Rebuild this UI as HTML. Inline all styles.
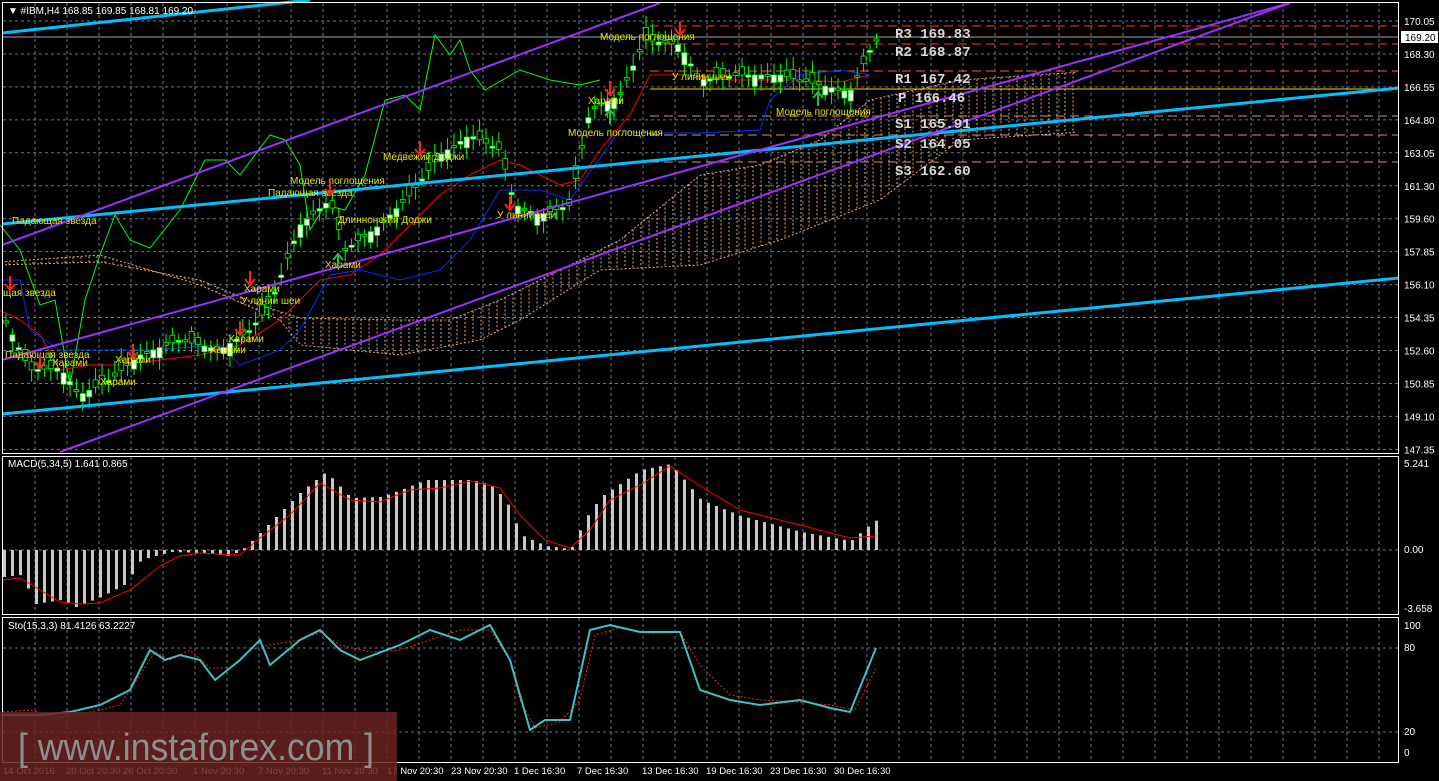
<!DOCTYPE html>
<html><head><meta charset="utf-8"><style>
html,body{margin:0;padding:0;background:#000;width:1439px;height:781px;overflow:hidden}
svg{display:block}
text{font-family:"Liberation Sans","DejaVu Sans",sans-serif}
.ax{fill:#fff;font-size:10px}
.pv text{fill:#d8d8d8;font-family:"Liberation Mono",monospace;font-size:14px;font-weight:bold}
.pt{fill:#e6e600;font-size:10px}
#xax text{font-size:9.5px}
</style></head><body>
<svg id="s" width="1439" height="781" xmlns="http://www.w3.org/2000/svg">
<rect width="1439" height="781" fill="#000"/>
<g id="grid" stroke="#6a7888" stroke-dasharray="3,3" stroke-width="1"></g>
<g id="cloud" stroke="#e8a878" stroke-width="1" stroke-dasharray="2,2" fill="none"></g>
<g stroke-width="1">
<line x1="650" y1="26" x2="1399" y2="26" stroke="#ff4000" stroke-dasharray="9,5"/>
<line x1="650" y1="44" x2="1399" y2="44" stroke="#ff4000" stroke-dasharray="9,5"/>
<line x1="650" y1="71" x2="1399" y2="71" stroke="#ff5a20" stroke-dasharray="9,5"/>
<line x1="650" y1="89" x2="1399" y2="89" stroke="#ffd000"/>
<line x1="650" y1="116" x2="1399" y2="116" stroke="#d09080" stroke-dasharray="9,5"/>
<line x1="650" y1="135" x2="1399" y2="135" stroke="#d09080" stroke-dasharray="9,5"/>
<line x1="650" y1="162" x2="1399" y2="162" stroke="#d09080" stroke-dasharray="9,5"/>
<line x1="2" y1="37" x2="1399" y2="37" stroke="#a0a0a0"/>
</g>
<g id="ind" fill="none" stroke-width="1"></g>
<g id="candles"></g>
<g stroke-width="3" stroke="#00bfff">
<line x1="2" y1="33" x2="310" y2="0"/>
<line x1="2" y1="224" x2="1399" y2="88"/>
<line x1="2" y1="414" x2="1399" y2="278"/>
</g>
<g stroke-width="2" stroke="#9b30ff">
<line x1="2" y1="245" x2="660" y2="3"/>
<line x1="2" y1="360" x2="1290" y2="3"/>
<line x1="60" y1="452" x2="1290" y2="3"/>
</g>
<g id="pat"></g>
<g class="pv">
<text x="895" y="38">R3 169.83</text>
<text x="895" y="56">R2 168.87</text>
<text x="895" y="83">R1 167.42</text>
<text x="898" y="102">P 166.46</text>
<text x="895" y="128">S1 165.91</text>
<text x="895" y="148">S2 164.05</text>
<text x="895" y="175">S3 162.60</text>
</g>
<g id="macd"></g>
<g id="sto" fill="none"></g>
<g fill="none" stroke="#fff" stroke-width="1">
<rect x="2.5" y="2.5" width="1396" height="451"/>
<rect x="2.5" y="456.5" width="1396" height="158"/>
<rect x="2.5" y="617.5" width="1396" height="145"/>
</g>
<text x="8" y="14" class="ax" font-size="11">▼ #IBM,H4  168.85 169.85 168.81 169.20</text>
<text x="8" y="467" class="ax">MACD(5,34,5) 1.641 0.865</text>
<text x="8" y="629" class="ax">Sto(15,3,3) 81.4126 63.2227</text>
<g id="yax" class="ax"></g>
<rect x="1401" y="31" width="37" height="12" fill="#fff"/>
<text x="1405" y="41" font-size="10" fill="#000">169.20</text>
<g class="ax">
<text x="1404" y="467">5.241</text><text x="1404" y="553">0.00</text><text x="1404" y="612">-3.658</text>
<text x="1404" y="629">100</text><text x="1404" y="651">80</text><text x="1404" y="735">20</text><text x="1404" y="756">0</text>
</g>
<g id="xax" class="ax"></g>
<rect x="0" y="712" width="397" height="69" fill="#6a2222" fill-opacity="0.85"/>
<text x="18" y="760" font-size="38" fill="#8e8e8e" textLength="356" lengthAdjust="spacingAndGlyphs">[ www.instaforex.com ]</text>
</svg>
<script>
var NS="http://www.w3.org/2000/svg";
function el(p,t,a){var e=document.createElementNS(NS,t);for(var k in a)e.setAttribute(k,a[k]);p.appendChild(e);return e;}
function gi(id){return document.getElementById(id);}
(function(){
var grid=gi("grid");
for(var x=35;x<1399;x+=32){el(grid,"line",{x1:x,y1:3,x2:x,y2:453});el(grid,"line",{x1:x,y1:457,x2:x,y2:614});el(grid,"line",{x1:x,y1:618,x2:x,y2:762});}
var labs=["170.05","168.30","166.55","164.80","163.05","161.30","159.60","157.85","156.10","154.35","152.60","150.85","149.10","147.35"];
for(var i=0;i<14;i++){var y=21+i*32.95;el(grid,"line",{x1:3,y1:y,x2:1399,y2:y});var t=el(gi("yax"),"text",{x:1404,y:y+4});t.textContent=labs[i];}
[550,648,732].forEach(function(y){el(grid,"line",{x1:3,y1:y,x2:1399,y2:y});});
var xl=[[3,"14 Oct 2016"],[66,"20 Oct 20:30"],[123,"26 Oct 20:30"],[193,"1 Nov 20:30"],[258,"7 Nov 20:30"],[322,"11 Nov 20:30"],[387,"17 Nov 20:30"],[451,"23 Nov 20:30"],[514,"1 Dec 16:30"],[577,"7 Dec 16:30"],[642,"13 Dec 16:30"],[706,"19 Dec 16:30"],[770,"23 Dec 16:30"],[834,"30 Dec 16:30"]];
xl.forEach(function(a){var t=el(gi("xax"),"text",{x:a[0],y:774});t.textContent=a[1];});
function interp(pts,x){for(var i=1;i<pts.length;i++){if(x<=pts[i][0]){var a=pts[i-1],b=pts[i];return a[1]+(b[1]-a[1])*(x-a[0])/(b[0]-a[0]);}}return pts[pts.length-1][1];}
function pl(p,pts,c,w,extra){var a={points:pts.map(function(q){return q.join(",")}).join(" "),stroke:c,"stroke-width":w||1,fill:"none"};for(var k in extra)a[k]=extra[k];return el(p,"polyline",a);}
var price=[[0,310],[30,370],[60,368],[80,395],[110,380],[140,355],[180,340],[220,350],[250,330],[270,305],[300,225],[330,200],[345,250],[380,225],[410,195],[440,155],[470,135],[500,150],[515,205],[540,215],[570,205],[590,110],[620,95],[645,40],[680,45],[700,80],[740,75],[780,75],[820,85],[850,92],[875,40]];
var cu=[],cl=[];
for(var x=5;x<1080;x+=4){var u=interp([[0,265],[100,262],[200,280],[260,305],[300,318],[400,320],[450,320],[500,300],[560,270],[620,240],[700,175],[760,165],[820,140],[870,100],[960,80],[1080,72]],x);var l=interp([[0,262],[100,255],[200,285],[280,320],[300,345],[400,355],[480,340],[520,320],[600,270],[700,265],[780,240],[830,220],[880,200],[960,140],[1080,132]],x);cu.push([x,u]);cl.push([x,l]);if(((x/4)|0)%2==0)el(gi("cloud"),"line",{x1:x,y1:u,x2:x,y2:l});}
pl(gi("cloud"),cu,"#e8a878",1);pl(gi("cloud"),cl,"#e8a878",1);
var ind=gi("ind");
pl(ind,[[0,225],[20,250],[40,305],[55,300],[70,385],[85,300],[100,255],[115,215],[130,240],[150,248],[180,210],[205,160],[225,160],[240,175],[270,135],[285,140],[300,165],[310,230],[325,205],[345,210],[365,175],[385,100],[405,95],[420,110],[435,35],[450,55],[460,40],[470,70],[485,90],[520,70],[550,80],[580,85],[600,80]],"#00ff00");
pl(ind,[[0,310],[20,320],[40,335],[60,370],[90,365],[120,365],[160,360],[200,355],[240,345],[280,320],[320,280],[350,275],[380,255],[410,225],[440,195],[470,175],[500,160],[520,165],[560,185],[580,180],[600,150],[630,115],[650,75],[690,75],[730,80],[760,80],[800,80],[840,82],[870,75]],"#ff0000");
pl(ind,[[0,280],[20,280],[30,330],[60,350],[100,350],[150,350],[220,345],[240,365],[280,350],[300,330],[330,275],[360,270],[400,280],[440,270],[470,240],[500,190],[540,190],[570,200],[620,130],[640,133],[700,133],[760,130],[770,100],[800,75],[840,70],[870,75]],"#0030ff");
var cg=gi("candles");
for(var x=6;x<880;x+=6.4){var y=interp(price,x);var d=(Math.sin(x*1.7)*7+Math.cos(x*0.9)*6);var hi=Math.min(y,y+d)-5-Math.abs(Math.sin(x))*7,lo=Math.max(y,y+d)+5+Math.abs(Math.cos(x*1.3))*7;
el(cg,"line",{x1:x,y1:hi,x2:x,y2:lo,stroke:"#00ff00"});
var bt=Math.min(y,y+d),h=Math.max(2,Math.abs(d));
el(cg,"rect",{x:x-2.5,y:bt,width:5,height:h,fill:(d>0?"#fff":"#000"),stroke:"#00ff00","stroke-width":0.8});}
var pat=gi("pat");
[[600,40,"Модель поглощения"],[672,80,"У линии шеи"],[776,115,"Модель поглощения"],[568,136,"Модель поглощения"],[383,160,"Медвежий Доджи"],[290,184,"Модель поглощения"],[268,196,"Падающая звезда"],[338,223,"Длинноногий Доджи"],[497,218,"У линии шеи"],[12,224,"Падающая звезда"],[588,104,"Харами"],[325,268,"Харами"],[3,296,"щая звезда"],[244,292,"Харами"],[241,304,"У линии шеи"],[5,358,"Падающая звезда"],[52,366,"Харами"],[115,363,"Харами"],[100,385,"Харами"],[228,342,"Харами"],[210,353,"Харами"]].forEach(function(a){var t=el(pat,"text",{x:a[0],y:a[1],class:"pt"});t.textContent=a[2];});
[[10,290],[40,368],[250,285],[330,195],[420,155],[510,210],[610,95],[680,35],[133,358],[240,335]].forEach(function(a){el(pat,"path",{d:"M"+a[0]+" "+(a[1]-14)+"V"+a[1]+"M"+(a[0]-5)+" "+(a[1]-6)+"L"+a[0]+" "+a[1]+"L"+(a[0]+5)+" "+(a[1]-6),stroke:"#ff2020","stroke-width":2,fill:"none"});});
[[338,268],[610,124],[818,106]].forEach(function(a){el(pat,"path",{d:"M"+a[0]+" "+(a[1]-14)+"V"+a[1]+"M"+(a[0]-5)+" "+(a[1]-8)+"L"+a[0]+" "+(a[1]-14)+"L"+(a[0]+5)+" "+(a[1]-8),stroke:"#20c040","stroke-width":2,fill:"none"});});
var m=gi("macd");
var mp=[[3,577],[20,575],[35,604],[60,600],[75,607],[100,597],[125,584],[140,560],[170,552],[200,553],[230,556],[245,547],[265,527],[300,492],[325,472],[350,498],[380,497],[400,490],[425,480],[470,480],[490,485],[505,500],[520,535],[545,546],[570,549],[585,518],[600,497],[640,470],[670,464],[700,500],[740,516],[800,532],[850,541],[865,528],[876,520]];
for(var x=3;x<880;x+=8){var y=interp(mp,x);var a=Math.min(y,550),b=Math.max(y,550);el(m,"rect",{x:x,y:a,width:3,height:Math.max(1,b-a),fill:"#c8c8c8"});}
pl(m,[[3,580],[20,578],[40,590],[60,602],[80,604],[100,603],[130,590],[160,566],[180,556],[200,553],[240,555],[260,538],[290,515],[320,483],[350,500],[380,502],[410,490],[440,488],[470,481],[500,488],[520,515],[545,540],[570,548],[590,530],[610,500],[640,485],[670,466],[700,486],[740,510],[800,525],[850,538],[876,536]],"#ff0000");
var s=gi("sto");
pl(s,[[3,712],[30,710],[60,718],[90,712],[120,705],[140,675],[155,652],[170,660],[190,650],[210,668],[230,668],[250,650],[270,645],[300,640],[320,632],[340,645],[370,652],[400,650],[430,640],[460,630],[490,630],[510,660],[520,700],[535,728],[560,722],[580,700],[595,635],[620,628],[650,633],[680,632],[700,665],[730,695],[760,700],[800,702],[830,705],[855,710],[876,668]],"#ff2020",1,{"stroke-dasharray":"2,2"});
pl(s,[[3,715],[40,715],[70,712],[100,705],[130,690],[150,650],[165,660],[180,655],[200,660],[215,680],[240,660],[260,640],[270,665],[300,640],[320,630],[340,650],[360,660],[400,645],[430,630],[460,640],[490,625],[510,660],[530,730],[545,720],[570,720],[590,630],[610,625],[640,632],[680,632],[700,690],[730,700],[760,705],[800,700],[830,708],[850,712],[876,648]],"#40c0c0",2);
})();
</script>
</body></html>
